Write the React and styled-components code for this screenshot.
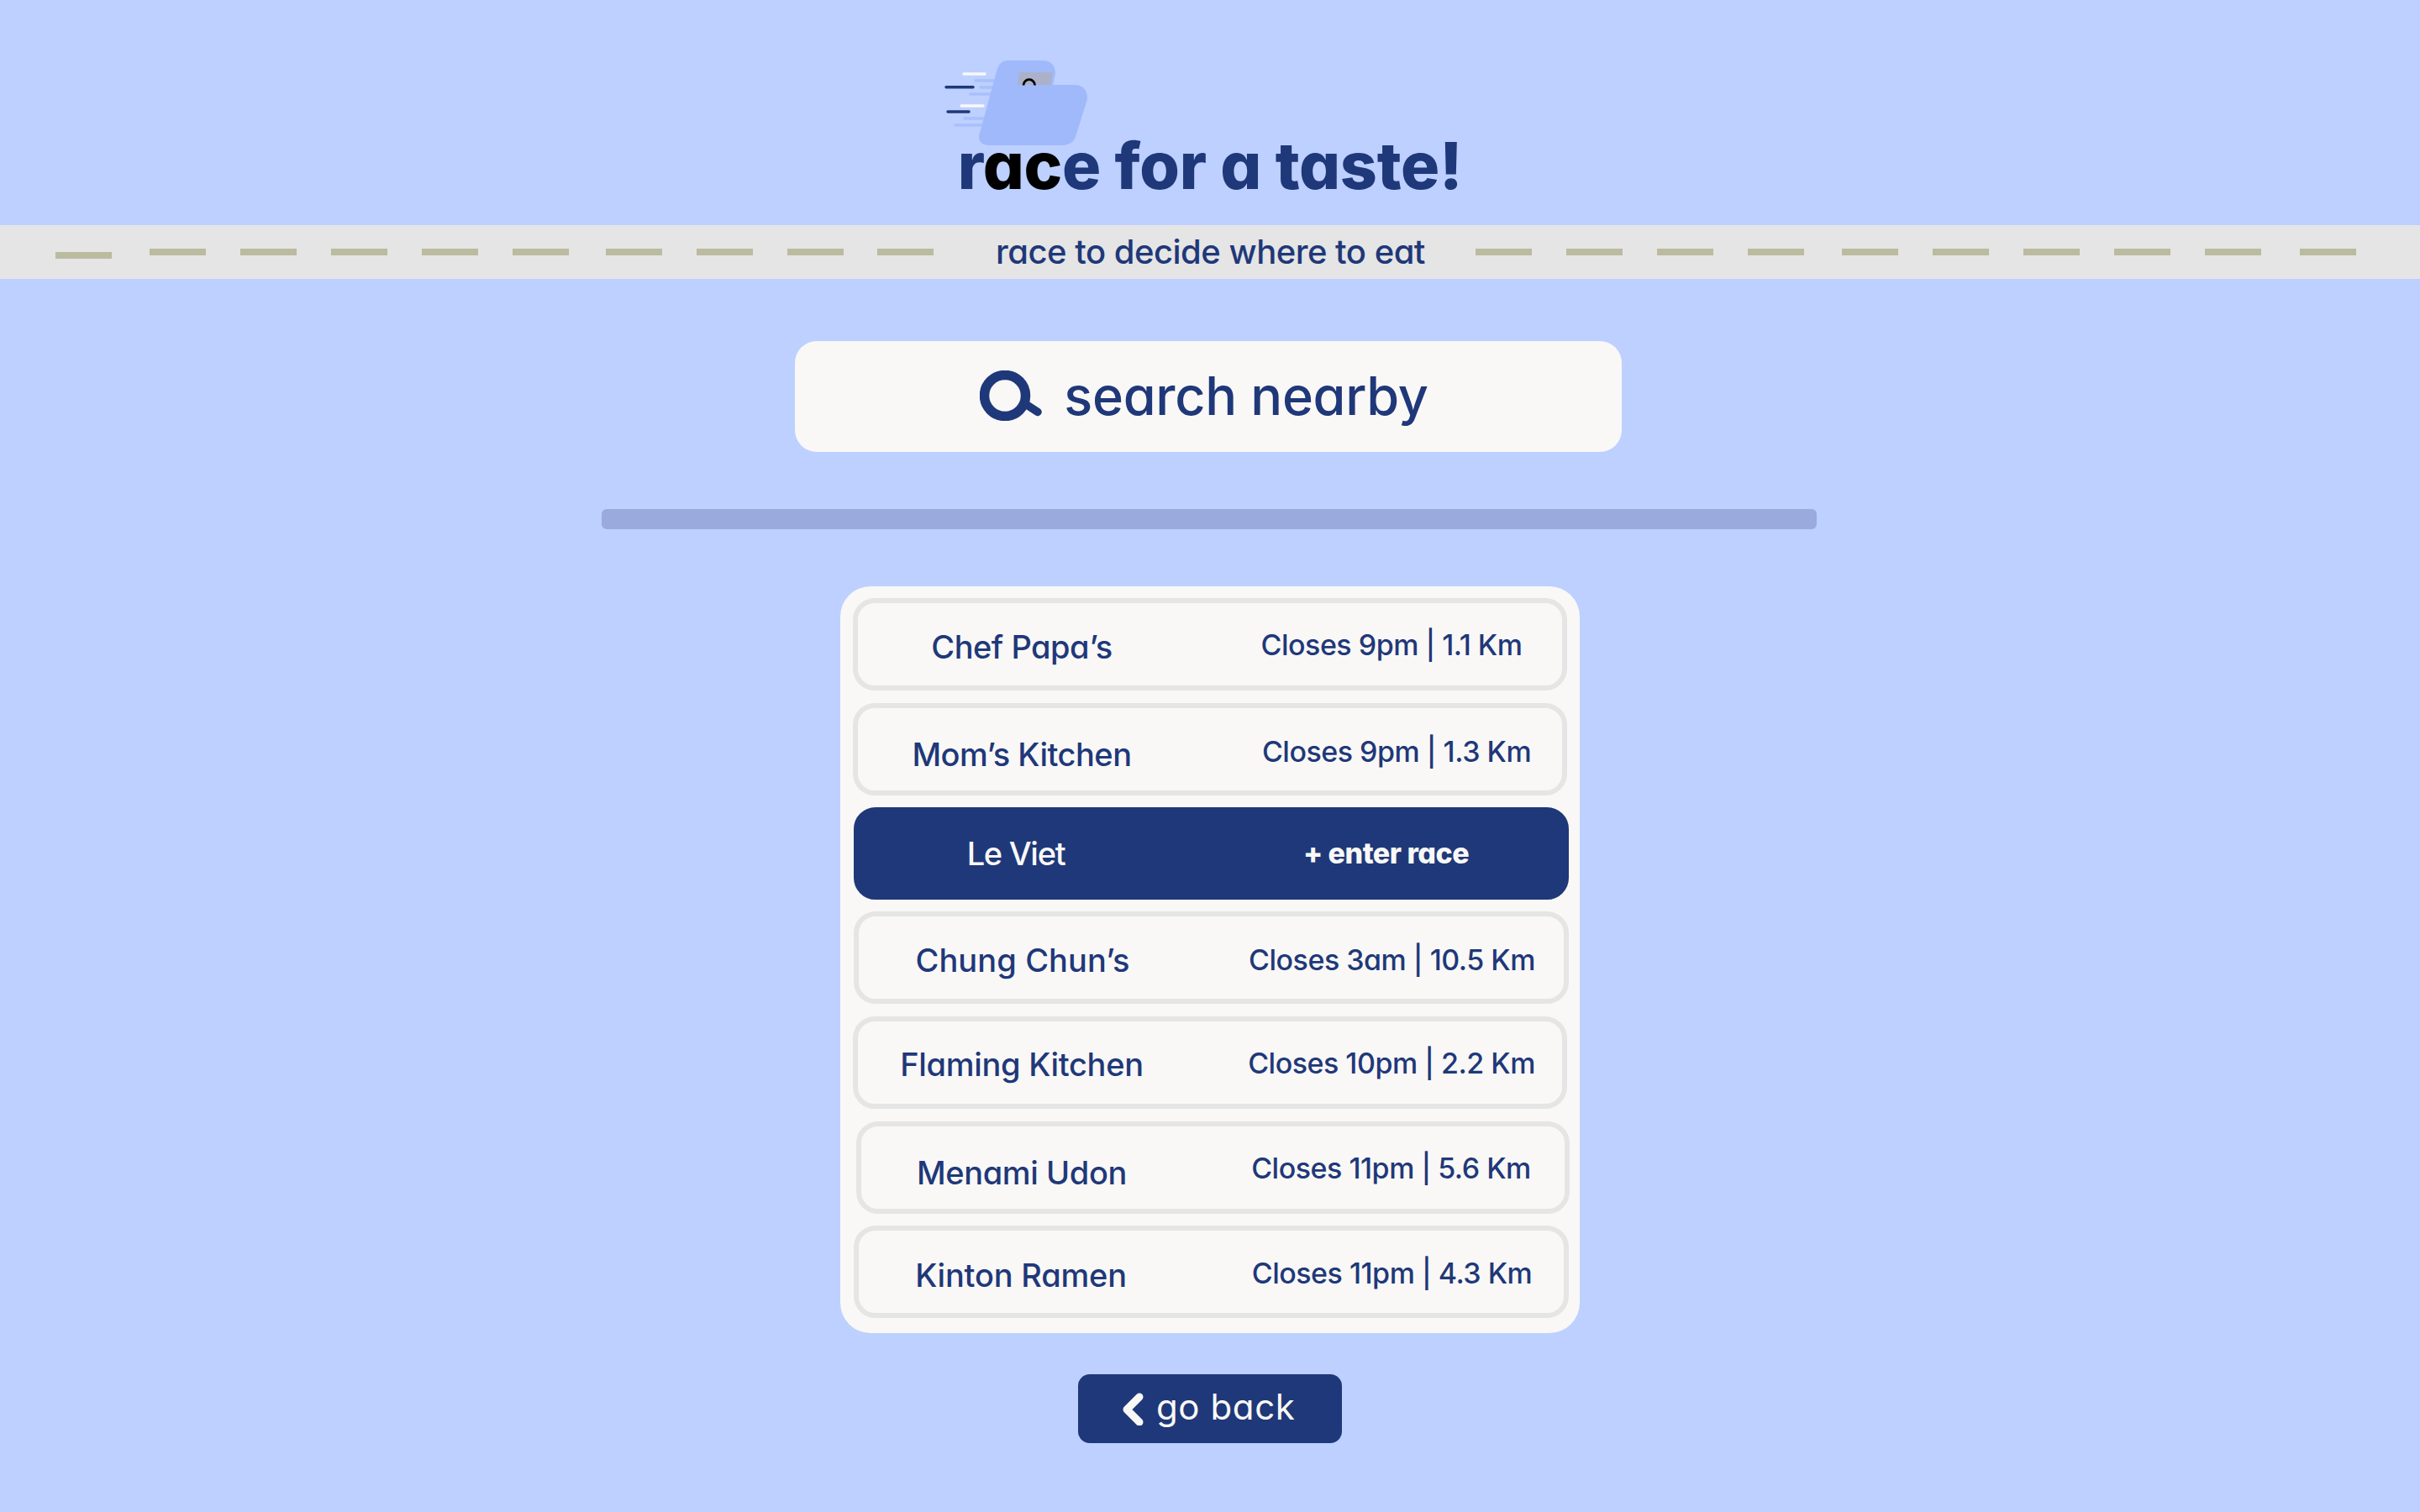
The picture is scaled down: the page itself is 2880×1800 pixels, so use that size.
import React from "react";
import styled, { createGlobalStyle } from "styled-components";

const navy = "#1f3879";
const paper = "#f9f8f6";

const Global = createGlobalStyle`
  html, body { margin: 0; padding: 0; background: #bdd0ff; }
  body { font-family: Inter, "Noto Sans", sans-serif; font-feature-settings: "cv11" 1; color: ${navy}; }
`;

const Page = styled.main`
  min-height: 1800px;
  display: flex;
  flex-direction: column;
  align-items: center;
  background: #bdd0ff;
`;

const Header = styled.header`
  display: flex;
  flex-direction: column;
  align-items: center;
  padding-top: 60px;
  height: 268px;
  box-sizing: border-box;
`;

const LogoWrap = styled.div`
  width: 220px;
  height: 130px;
  margin-right: 460px;
  flex: none;
`;

const Title = styled.h1`
  margin: -38px 0 0;
  font-size: 77px;
  line-height: 90px;
  font-weight: 800;
  letter-spacing: -0.3px;
  white-space: nowrap;
`;

const Black = styled.span`
  color: #000;
`;

const Band = styled.div`
  width: 100%;
  height: 64px;
  background: #e5e5e5;
  display: grid;
  grid-template-columns: 1185px 511px 1fr;
  align-items: center;
`;

const DashTrack = styled.div`
  display: flex;
  align-items: center;
  padding-left: ${(p) => p.$start}px;
`;

const Dash = styled.span`
  flex: none;
  width: 67px;
  height: 8px;
  margin-left: ${(p) => p.$gap}px;
  margin-top: ${(p) => (p.$low ? 8 : 0)}px;
  background: #bbbb9f;
`;

const Tagline = styled.div`
  font-size: 40px;
  line-height: 64px;
  text-align: center;
  white-space: nowrap;
  font-weight: 500;
  letter-spacing: -0.5px;
`;

const SearchButton = styled.button`
  width: 984px;
  height: 132px;
  margin: 74px 4px 0 0;
  border: 0;
  border-radius: 26px;
  background: ${paper};
  color: ${navy};
  display: flex;
  align-items: center;
  justify-content: center;
  gap: 25px;
  font-family: inherit;
  font-feature-settings: inherit;
  font-size: 63px;
  font-weight: 500;
  padding: 0 10px 2px 0;
  letter-spacing: -0.3px;
`;

const Progress = styled.div`
  width: 1446px;
  height: 24px;
  margin: 68px 2px 0 0;
  border-radius: 6px;
  background: #9aaadd;
`;

const ListCard = styled.section`
  width: 880px;
  height: 889px;
  box-sizing: border-box;
  margin-top: 68px;
  padding-top: 14px;
  border-radius: 36px;
  background: ${paper};
  display: flex;
  flex-direction: column;
`;

const Row = styled.div`
  box-sizing: border-box;
  width: ${(p) => p.$w}px;
  height: 110px;
  margin-left: ${(p) => p.$left}px;
  margin-top: ${(p) => p.$gap}px;
  border-radius: 26px;
  border: 6px solid ${(p) => (p.$active ? navy : "#e5e5e5")};
  background: ${(p) => (p.$active ? navy : paper)};
  color: ${(p) => (p.$active ? paper : navy)};
  display: grid;
  grid-template-columns: 390px 1fr;
  align-items: center;
  white-space: nowrap;
`;

const Name = styled.div`
  font-size: 38px;
  font-weight: 500;
  line-height: 46px;
  text-align: center;
  letter-spacing: ${(p) => p.$track}px;
  padding-top: ${(p) => p.$dy * 2}px;
  margin-left: ${(p) => p.$dx}px;
`;

const Meta = styled.div`
  font-size: 34px;
  font-weight: ${(p) => (p.$bold ? 800 : 500)};
  line-height: 42px;
  text-align: center;
  letter-spacing: -0.5px;
  padding-top: ${(p) => p.$dy * 2}px;
  margin-left: ${(p) => p.$dx}px;
`;

const BackButton = styled.button`
  width: 314px;
  height: 82px;
  margin-top: 49px;
  border: 0;
  border-radius: 14px;
  background: ${navy};
  color: ${paper};
  display: flex;
  align-items: center;
  justify-content: flex-start;
  gap: 15px;
  padding: 0 0 0 52px;
  font-family: inherit;
  font-feature-settings: inherit;
  font-size: 42px;
  letter-spacing: 0.6px;
`;

const BackLabel = styled.span`
  margin-top: -6px;
`;

const leftDashes = [
  [0, true],
  [45],
  [41],
  [41],
  [41],
  [41],
  [44],
  [41],
  [41],
  [40],
];
const rightDashes = [0, 41, 41, 41, 45, 41, 41, 41, 41, 46];

const rows = [
  { name: "Chef Papa’s", meta: "Closes 9pm | 1.1 Km", left: 15, w: 850, gap: 0, ndy: 3, mdy: 1, mdx: 42, track: -0.5 },
  { name: "Mom’s Kitchen", meta: "Closes 9pm | 1.3 Km", left: 15, w: 850, gap: 15, ndy: 6, mdy: 3, mdx: 54, track: -0.5 },
  { name: "Le Viet", meta: "+ enter race", left: 16, w: 851, gap: 14, ndy: 0, mdy: 0, ndx: -16, mdx: 26, active: true, track: -1.3 },
  { name: "Chung Chun’s", meta: "Closes 3am | 10.5 Km", left: 16, w: 851, gap: 14, ndy: 3, mdy: 3, mdx: 40, track: 0.1 },
  { name: "Flaming Kitchen", meta: "Closes 10pm | 2.2 Km", left: 15, w: 850, gap: 15, ndy: 2, mdy: 1, mdx: 42, track: -0.3 },
  { name: "Menami Udon", meta: "Closes 11pm | 5.6 Km", left: 19, w: 849, gap: 15, ndy: 6, mdy: 1, ndx: -8, mdx: 34, track: -0.4 },
  { name: "Kinton Ramen", meta: "Closes 11pm | 4.3 Km", left: 16, w: 851, gap: 14, ndy: 4, mdy: 2, ndx: -4, mdx: 40, track: -0.2 },
];

function Logo() {
  const light = "#a9c0fc";
  const line = (x1, x2, y, c, w = 3.4) => (
    <line x1={x1} x2={x2} y1={y} y2={y} stroke={c} strokeWidth={w} strokeLinecap="round" />
  );
  return (
    <LogoWrap>
      <svg width="220" height="130" viewBox="0 0 220 130" fill="none">
        {line(47, 72, 28, paper)}
        {line(61, 84, 36, light)}
        {line(26, 58, 43.7, navy)}
        {line(67, 84, 44, light)}
        {line(55, 84, 52, light)}
        {line(44, 70, 66, paper)}
        {line(28, 53, 73, navy)}
        {line(48, 72, 81, light)}
        {line(37, 72, 89, light)}
        <path
          d="M100 12H140Q156 12 156 28L153 41H178Q194 41 194 58L180 103Q176 113 163 113H78Q65 113 65 102L86 25Q89 12 100 12Z"
          fill="#a0b9fb"
        />
        <path d="M114.5 26H151.5Q153 26 152.7 28L150.5 41H111L113 28Q113.3 26 114.5 26Z" fill="#abb1c8" />
        <path d="M118 41.5a6.8 6.8 0 0 1 13.6 0" stroke="#000" strokeWidth="2.8" />
      </svg>
    </LogoWrap>
  );
}

function SearchIcon() {
  return (
    <svg width="75" height="60" viewBox="0 0 75 60" fill="none">
      <circle cx="30" cy="30" r="24.5" stroke={navy} strokeWidth="11.5" />
      <line x1="56" y1="41" x2="69" y2="49.5" stroke={navy} strokeWidth="9.5" strokeLinecap="round" />
    </svg>
  );
}

function Chevron() {
  return (
    <svg width="26" height="40" viewBox="0 0 26 40" fill="none">
      <path d="M21 6L6 21L21 36" stroke={paper} strokeWidth="9" strokeLinecap="round" strokeLinejoin="round" />
    </svg>
  );
}

export default function App() {
  return (
    <Page>
      <Global />
      <Header>
        <Logo />
        <Title>
          r<Black>ac</Black>e for a taste!
        </Title>
      </Header>
      <Band>
        <DashTrack $start={66}>
          {leftDashes.map(([gap, low], i) => (
            <Dash key={i} $gap={gap} $low={low} />
          ))}
        </DashTrack>
        <Tagline>race to decide where to eat</Tagline>
        <DashTrack $start={60}>
          {rightDashes.map((gap, i) => (
            <Dash key={i} $gap={gap} />
          ))}
        </DashTrack>
      </Band>
      <SearchButton>
        <SearchIcon />
        search nearby
      </SearchButton>
      <Progress />
      <ListCard>
        {rows.map((r) => (
          <Row key={r.name} $left={r.left} $w={r.w} $gap={r.gap} $active={r.active}>
            <Name $dy={r.ndy} $dx={r.ndx || 0} $track={r.track}>{r.name}</Name>
            <Meta $dy={r.mdy} $dx={r.mdx} $bold={r.active}>{r.meta}</Meta>
          </Row>
        ))}
      </ListCard>
      <BackButton>
        <Chevron />
        <BackLabel>go back</BackLabel>
      </BackButton>
    </Page>
  );
}
